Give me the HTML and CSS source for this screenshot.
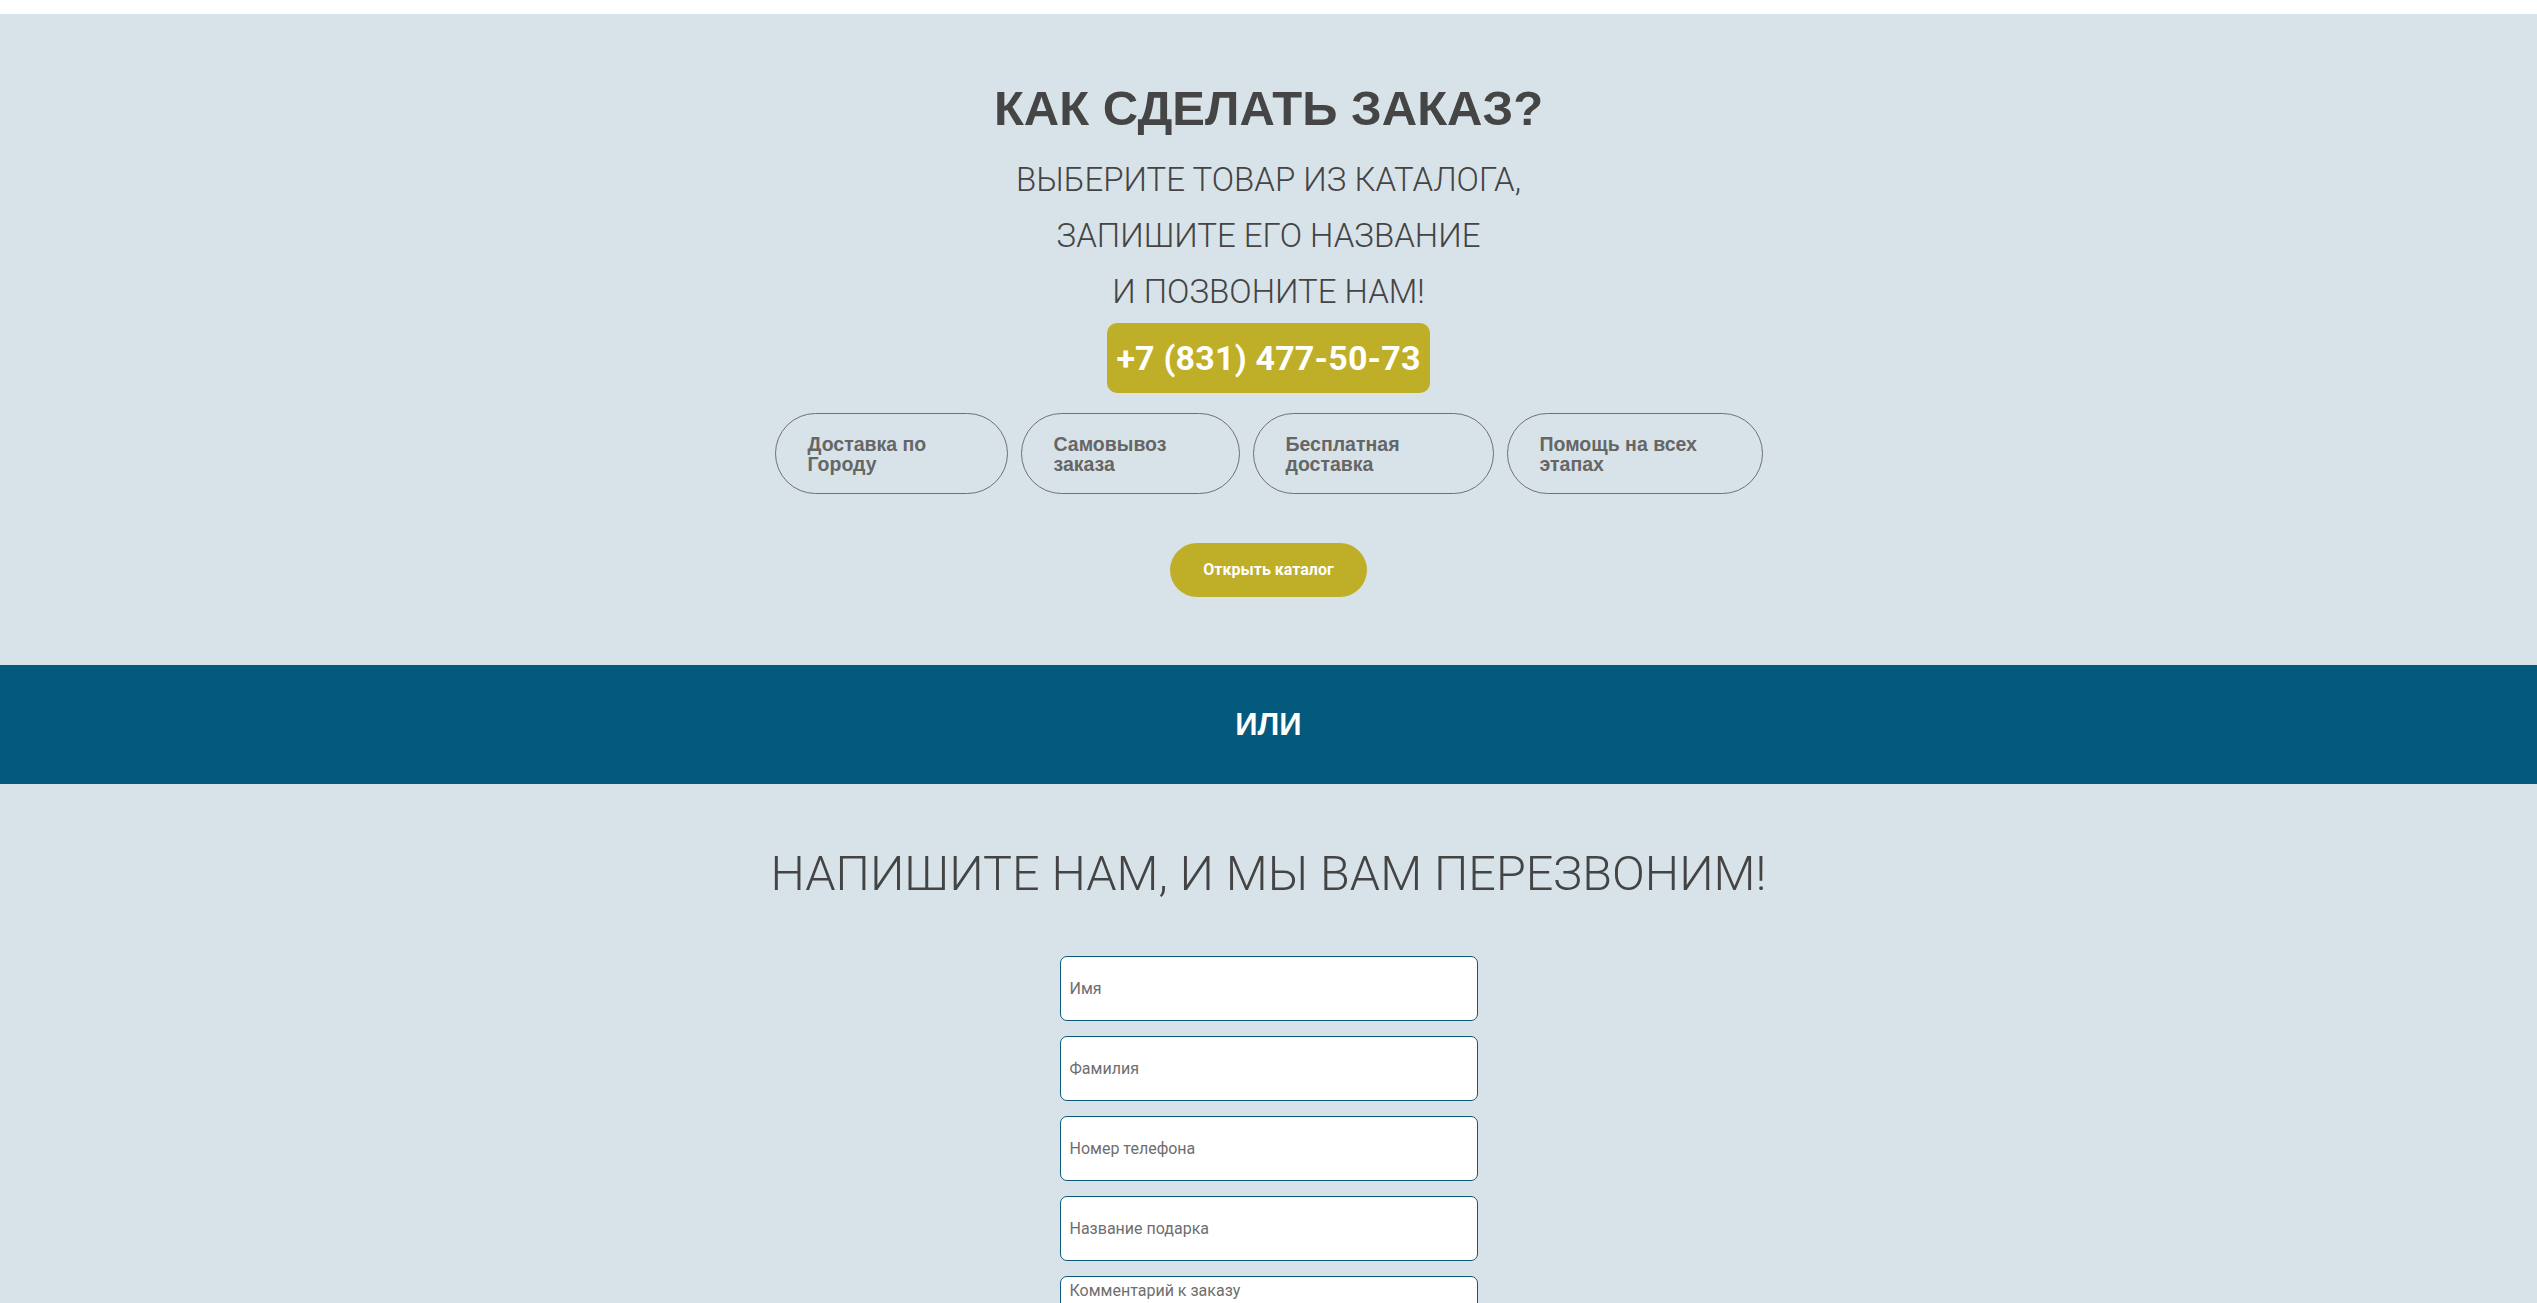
FILE: index.html
```html
<!DOCTYPE html>
<html lang="ru">
<head>
<meta charset="utf-8">
<title>Как сделать заказ?</title>
<link rel="stylesheet" href="styles.css">
</head>
<body>
<div class="topbar"></div>
<section class="order">
  <h2 class="order__title">КАК СДЕЛАТЬ ЗАКАЗ?</h2>
  <div class="order__text">
    <p>ВЫБЕРИТЕ ТОВАР ИЗ КАТАЛОГА,</p>
    <p>ЗАПИШИТЕ ЕГО НАЗВАНИЕ</p>
    <p>И ПОЗВОНИТЕ НАМ!</p>
  </div>
  <a class="phone" href="#">+7 (831) 477-50-73</a>
  <ul class="pills">
    <li class="pill pill--w1">Доставка по Городу</li>
    <li class="pill pill--w2">Самовывоз заказа</li>
    <li class="pill pill--w3">Бесплатная доставка</li>
    <li class="pill pill--w4">Помощь на всех этапах</li>
  </ul>
  <a class="catalog-btn" href="#">Открыть каталог</a>
</section>
<section class="or-band">
  <span class="or-band__text">ИЛИ</span>
</section>
<section class="callback">
  <h2 class="callback__title">НАПИШИТЕ НАМ, И МЫ ВАМ ПЕРЕЗВОНИМ!</h2>
  <form class="form">
    <input class="form__field" type="text" placeholder="Имя">
    <input class="form__field" type="text" placeholder="Фамилия">
    <input class="form__field" type="text" placeholder="Номер телефона">
    <input class="form__field" type="text" placeholder="Название подарка">
    <textarea class="form__field form__field--area" placeholder="Комментарий к заказу"></textarea>
  </form>
</section>
</body>
</html>
```
FILE: styles.css
```css
html, body {
  margin: 0;
  padding: 0;
  background: #ffffff;
}

body {
  font-family: "Roboto", "Liberation Sans", sans-serif;
  color: #464646;
}

.topbar {
  height: 14px;
  background: #ffffff;
}

.order {
  background: #d8e3e9;
  padding: 65px 0 68px;
  display: flex;
  flex-direction: column;
  align-items: center;
}

.order__title {
  margin: 0;
  font-family: "Liberation Sans", Arial, sans-serif;
  font-weight: 700;
  font-size: 49px;
  line-height: 58px;
  color: #454545;
}

.order__text {
  margin-top: 15px;
  text-align: center;
}

.order__text p {
  margin: 0;
  font-family: "Roboto", sans-serif;
  font-weight: 300;
  font-size: 33px;
  line-height: 56px;
  color: #444444;
}

.phone {
  margin-top: 3px;
  display: inline-block;
  padding: 15px 9px;
  line-height: 40px;
  font-family: "Roboto", sans-serif;
  font-weight: 700;
  font-size: 34px;
  letter-spacing: 0.2px;
  color: #ffffff;
  text-decoration: none;
  background: #bfae28;
  border-radius: 10px;
}

.pills {
  list-style: none;
  margin: 20px 0 0;
  padding: 0;
  display: flex;
  gap: 13px;
}

.pill {
  box-sizing: border-box;
  height: 81px;
  padding: 0 32px;
  display: flex;
  align-items: center;
  border: 1px solid #707070;
  border-radius: 41px;
  font-family: "Liberation Sans", Arial, sans-serif;
  font-weight: 700;
  font-size: 19.5px;
  line-height: 20px;
  color: #666666;
}

.pill--w1 { width: 233px; }
.pill--w2 { width: 219px; }
.pill--w3 { width: 241px; }
.pill--w4 { width: 256px; }

.catalog-btn {
  margin-top: 49px;
  display: inline-block;
  height: 54px;
  line-height: 54px;
  padding: 0 33px;
  border-radius: 27px;
  background: #bfae28;
  color: #ffffff;
  text-decoration: none;
  font-family: "Roboto", sans-serif;
  font-weight: 700;
  font-size: 16px;
}

.or-band {
  background: #045a7c;
  height: 119px;
  display: flex;
  align-items: center;
  justify-content: center;
}

.or-band__text {
  font-family: "Liberation Sans", Arial, sans-serif;
  font-weight: 700;
  font-size: 31px;
  color: #ffffff;
}

.callback {
  background: #d8e3e9;
  padding: 61px 0 80px;
  display: flex;
  flex-direction: column;
  align-items: center;
}

.callback__title {
  margin: 0;
  font-family: "Roboto", sans-serif;
  font-weight: 300;
  font-size: 48.5px;
  line-height: 58px;
  color: #444444;
}

.form {
  margin-top: 53px;
  width: 418px;
  display: flex;
  flex-direction: column;
  gap: 15px;
}

.form__field {
  box-sizing: border-box;
  display: block;
  width: 100%;
  height: 65px;
  margin: 0;
  padding: 0 9px;
  border: 1px solid #0b5a7b;
  border-radius: 7px;
  background: #ffffff;
  font-family: "Roboto", sans-serif;
  font-size: 16px;
  color: #333333;
  outline: none;
}

.form__field::placeholder {
  color: #6e6e6e;
  opacity: 1;
}

.form__field--area {
  height: 110px;
  padding: 4px 9px;
  resize: none;
}
```
